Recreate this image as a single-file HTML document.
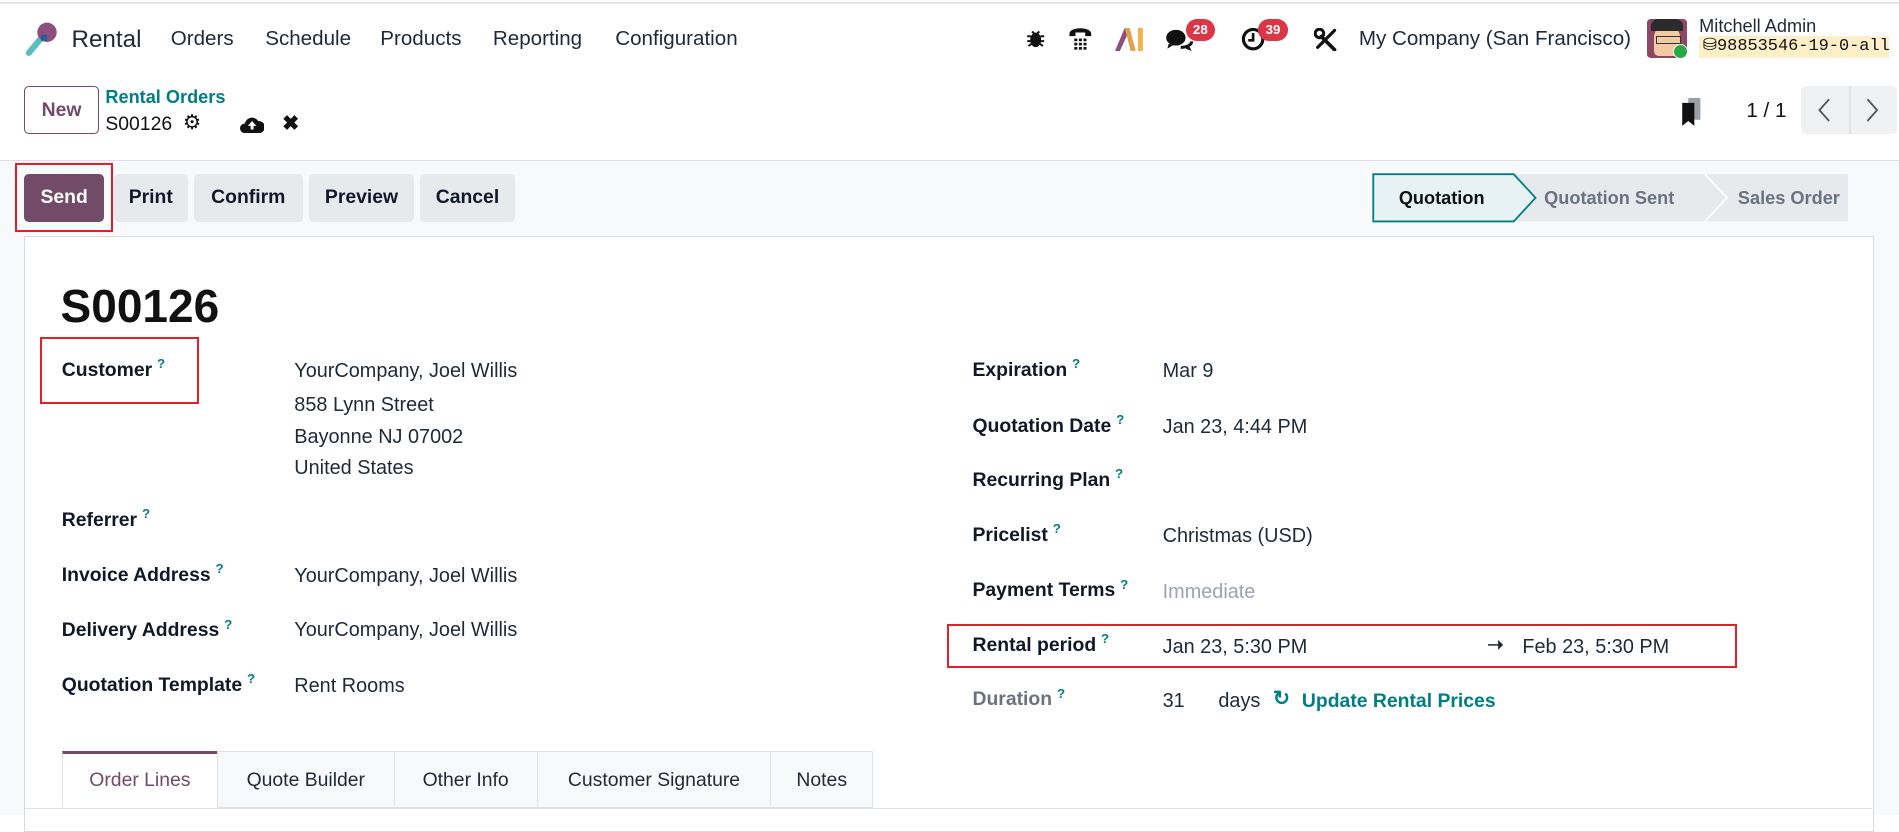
<!DOCTYPE html>
<html><head><meta charset="utf-8">
<style>
html,body{margin:0;padding:0}
body{width:1568px;height:672px;zoom:1.2111;position:relative;overflow:hidden;background:#fff;font-family:"Liberation Sans",sans-serif;color:#1f2937;font-size:16px}
.a{position:absolute;white-space:nowrap;line-height:1}
.v{font-size:16.4px}
.lb{font-weight:bold;color:#111827}
.q{color:#017e84;font-size:11px;vertical-align:top;margin-left:4px;position:relative;top:-3px}
.btn{position:absolute;top:144px;height:39px;line-height:39px;background:#e7e9ed;border-radius:4px;font-weight:bold;text-align:center;font-size:16px;color:#111827}
.tab{position:absolute;top:620px;height:47px;line-height:47px;text-align:center;border:1px solid #dee2e6;background:#f8f9fa;font-size:16px;box-sizing:border-box;color:#1f2937}
.badge{position:absolute;background:#dc3545;color:#fff;font-size:11px;font-weight:bold;border-radius:9px;padding:0 6px;height:18px;line-height:18px}
</style></head><body>
<div class="a" style="left:0;top:2px;width:1568px;height:1px;background:#e2e4e7"></div>
<svg class="a" style="left:20px;top:16px" width="30" height="32" viewBox="0 0 30 32"><line x1="4" y1="28" x2="14" y2="16" stroke="#5bbdbd" stroke-width="5" stroke-linecap="round"/><ellipse cx="19" cy="11" rx="8" ry="8" fill="#8c4f7e"/><rect x="14" y="13" width="5" height="5" fill="#2a5b9c"/></svg>
<div class="a" style="left:59px;top:23px;font-size:20px">Rental</div>
<div class="a" style="left:141px;top:24px;font-size:17px">Orders</div>
<div class="a" style="left:219px;top:24px;font-size:17px">Schedule</div>
<div class="a" style="left:314px;top:24px;font-size:17px">Products</div>
<div class="a" style="left:407px;top:24px;font-size:17px">Reporting</div>
<div class="a" style="left:508px;top:24px;font-size:17px">Configuration</div>
<svg class="a" style="left:847px;top:24px" width="16" height="16" viewBox="0 0 16 16"><ellipse cx="8" cy="9" rx="4.5" ry="6" fill="#111"/><path d="M1 6h3M12 6h3M1 10h3M12 10h3M2 14l3-2M14 14l-3-2M5 2l2 2M11 2l-2 2" stroke="#111" stroke-width="1.6"/></svg>
<svg class="a" style="left:881px;top:20px" width="22" height="22" viewBox="0 0 22 22"><path d="M2 8c0-6 18-6 18 0v2h-5V7H7v3H2z" fill="#111"/><g fill="#111"><rect x="6" y="12" width="2.5" height="2.2"/><rect x="9.8" y="12" width="2.5" height="2.2"/><rect x="13.6" y="12" width="2.5" height="2.2"/><rect x="6" y="15.5" width="2.5" height="2.2"/><rect x="9.8" y="15.5" width="2.5" height="2.2"/><rect x="13.6" y="15.5" width="2.5" height="2.2"/><rect x="6" y="19" width="2.5" height="2.2"/><rect x="9.8" y="19" width="2.5" height="2.2"/><rect x="13.6" y="19" width="2.5" height="2.2"/></g></svg>
<svg class="a" style="left:921px;top:23px" width="24" height="19" viewBox="0 0 24 19"><path d="M0 19L8 0h4l5 19h-4L10 6 4 19z" fill="#8c4f7e"/><path d="M8 0h4l5 19h-4z" fill="#e2a24a"/><rect x="19" y="0" width="4" height="19" fill="#f4b04a"/></svg>
<svg class="a" style="left:962px;top:23px" width="24" height="20" viewBox="0 0 24 20"><ellipse cx="9" cy="8" rx="8" ry="6.5" fill="#111"/><path d="M3 13l-1 4 5-3z" fill="#111"/><path d="M13 16c5 0 9-2 9-5" stroke="#111" stroke-width="2.5" fill="none"/><path d="M20 15l2 4-5-2z" fill="#111"/></svg>
<div class="badge" style="left:979px;top:16px">28</div>
<svg class="a" style="left:1025px;top:22px" width="20" height="20" viewBox="0 0 20 20"><circle cx="10" cy="10" r="8" stroke="#111" stroke-width="2.6" fill="none"/><path d="M10 5v6h-4" stroke="#111" stroke-width="2.2" fill="none"/></svg>
<div class="badge" style="left:1039px;top:16px">39</div>
<svg class="a" style="left:1085px;top:23px" width="20" height="19" viewBox="0 0 20 19"><path d="M6 7l11 11" stroke="#111" stroke-width="3" stroke-linecap="round"/><circle cx="4.5" cy="4.5" r="3.5" fill="none" stroke="#111" stroke-width="2.5"/><path d="M17 2L3 16" stroke="#111" stroke-width="2.6" stroke-linecap="round"/></svg>
<div class="a" style="left:1122px;top:24px;font-size:17px">My Company (San Francisco)</div>
<div class="a" style="left:1360px;top:16px;width:33px;height:32px;background:#8d4866;border-radius:3px;overflow:hidden"><div style="position:absolute;left:6px;top:6px;width:21px;height:24px;background:#f1c9a3;border-radius:8px 8px 4px 4px"></div><div style="position:absolute;left:3px;top:0;width:27px;height:10px;background:#2b2b2b;border-radius:6px 6px 0 0"></div><div style="position:absolute;left:7px;top:14px;width:19px;height:5px;border:1.5px solid #333"></div></div>
<div class="a" style="left:1381px;top:36px;width:11px;height:11px;border-radius:50%;background:#28a745;border:1.5px solid #fff"></div>
<div class="a" style="left:1403px;top:14px;font-size:15px">Mitchell Admin</div>
<div class="a" style="left:1403px;top:30px;width:157px;height:18px;background:#fdf0c8"></div>
<div class="a" style="left:1406px;top:32px;font-size:14px;font-family:'Liberation Mono',monospace;color:#111">&#9921;98853546-19-0-all</div>
<div class="a" style="left:20px;top:71px;width:60px;height:38px;border:1px solid #714b67;border-radius:4px;text-align:center;line-height:38px;color:#714b67;font-weight:bold;font-size:16px">New</div>
<div class="a" style="left:87px;top:73px;color:#017e84;font-weight:bold;font-size:15px">Rental Orders</div>
<div class="a" style="left:87px;top:95px;font-size:16px;color:#111">S00126</div>
<div class="a" style="left:151px;top:93px;font-size:17px;color:#111">&#9881;</div>
<svg class="a" style="left:198px;top:95px" width="20" height="15" viewBox="0 0 20 15"><path d="M4 15a4 4 0 0 1 0-8 6 6 0 0 1 11-2 4.5 4.5 0 0 1 1 10z" fill="#111"/><path d="M10 5l-3.5 4h2.3v3h2.4V9h2.3z" fill="#fff"/></svg>
<div class="a" style="left:233px;top:94px;font-size:17px;font-weight:bold;color:#111">&#10006;</div>
<svg class="a" style="left:1388px;top:81px" width="20" height="24" viewBox="0 0 20 24"><rect x="6" y="0" width="10" height="18" fill="#9aa0a6"/><path d="M1 4h10v19l-5-4-5 4z" fill="#111"/></svg>
<div class="a" style="left:1442px;top:83px;font-size:17px;color:#111">1 / 1</div>
<div class="a" style="left:1487px;top:71px;width:79px;height:40px;background:#f0f1f2;border-radius:4px"></div>
<div class="a" style="left:1527px;top:71px;width:1px;height:40px;background:#e0e2e5"></div>
<svg class="a" style="left:1500px;top:81px" width="12" height="20"><path d="M10 1L2 10l8 9" stroke="#555" stroke-width="1.5" fill="none"/></svg>
<svg class="a" style="left:1540px;top:81px" width="12" height="20"><path d="M2 1l8 9-8 9" stroke="#555" stroke-width="1.5" fill="none"/></svg>
<div class="a" style="left:0;top:132px;width:1568px;height:540px;background:#f8f9fa;border-top:1px solid #dcdfe3"></div>
<div class="btn" style="left:20px;width:66px;background:#714b67;color:#fff">Send</div>
<div class="a" style="left:12px;top:135px;width:78px;height:53px;border:2px solid #e3202a"></div>
<div class="btn" style="left:94px;width:61px">Print</div>
<div class="btn" style="left:160px;width:90px">Confirm</div>
<div class="btn" style="left:255px;width:87px">Preview</div>
<div class="btn" style="left:347px;width:78px">Cancel</div>
<svg class="a" style="left:1133px;top:143px" width="394" height="41" viewBox="0 0 394 41"><rect x="100" y="1" width="293" height="39" fill="#e7e9ed"/><path d="M1 1h116l18 19.5L117 40H1z" fill="#e6f2f3" stroke="#017e84" stroke-width="1.5"/><path d="M275 1l18 19.5L275 40" stroke="#fff" stroke-width="1.5" fill="none"/></svg>
<div class="a" style="left:1155px;top:156px;font-weight:bold;font-size:15px;color:#111">Quotation</div>
<div class="a" style="left:1275px;top:156px;font-size:15px;color:#6b7280;font-weight:bold">Quotation Sent</div>
<div class="a" style="left:1435px;top:156px;font-size:15px;color:#6b7280;font-weight:bold">Sales Order</div>
<div class="a" style="left:20px;top:195px;width:1526px;height:490px;background:#fff;border:1px solid #d8dadd"></div>
<div class="a" style="left:50px;top:234px;font-size:38px;font-weight:bold;color:#111">S00126</div>
<div class="a lb" style="left:51px;top:298px">Customer<span class="q">?</span></div>
<div class="a" style="left:33px;top:278px;width:128px;height:52px;border:2px solid #e3202a"></div>
<div class="a v" style="left:243px;top:299px">YourCompany, Joel Willis</div>
<div class="a v" style="left:243px;top:327px">858 Lynn Street</div>
<div class="a v" style="left:243px;top:353px">Bayonne NJ 07002</div>
<div class="a v" style="left:243px;top:379px">United States</div>
<div class="a lb" style="left:51px;top:422px">Referrer<span class="q">?</span></div>
<div class="a lb" style="left:51px;top:467px">Invoice Address<span class="q">?</span></div>
<div class="a v" style="left:243px;top:468px">YourCompany, Joel Willis</div>
<div class="a lb" style="left:51px;top:513px">Delivery Address<span class="q">?</span></div>
<div class="a v" style="left:243px;top:513px">YourCompany, Joel Willis</div>
<div class="a lb" style="left:51px;top:558px">Quotation Template<span class="q">?</span></div>
<div class="a v" style="left:243px;top:559px">Rent Rooms</div>
<div class="a lb" style="left:803px;top:298px">Expiration<span class="q">?</span></div>
<div class="a v" style="left:960px;top:299px">Mar 9</div>
<div class="a lb" style="left:803px;top:344px">Quotation Date<span class="q">?</span></div>
<div class="a v" style="left:960px;top:345px">Jan 23, 4:44 PM</div>
<div class="a lb" style="left:803px;top:389px">Recurring Plan<span class="q">?</span></div>
<div class="a lb" style="left:803px;top:434px">Pricelist<span class="q">?</span></div>
<div class="a v" style="left:960px;top:435px">Christmas (USD)</div>
<div class="a lb" style="left:803px;top:480px">Payment Terms<span class="q">?</span></div>
<div class="a v" style="left:960px;top:481px;color:#9ca3af">Immediate</div>
<div class="a lb" style="left:803px;top:525px">Rental period<span class="q">?</span></div>
<div class="a v" style="left:960px;top:527px">Jan 23, 5:30 PM</div>
<div class="a" style="left:1228px;top:525px;font-weight:bold">&#10141;</div>
<div class="a v" style="left:1257px;top:527px">Feb 23, 5:30 PM</div>
<div class="a" style="left:782px;top:515px;width:649px;height:33px;border:2px solid #e3202a"></div>
<div class="a lb" style="left:803px;top:570px;color:#6b7280">Duration<span class="q">?</span></div>
<div class="a v" style="left:960px;top:571px">31</div>
<div class="a v" style="left:1006px;top:571px">days</div>
<div class="a" style="left:1051px;top:569px;color:#017e84;font-weight:bold;font-size:17px">&#8635;</div>
<div class="a" style="left:1075px;top:571px;color:#017e84;font-weight:bold">Update Rental Prices</div>
<div class="a" style="left:21px;top:667px;width:1525px;height:1px;background:#dee2e6"></div>
<div class="tab" style="left:51px;width:129px;background:#fff;border-top:3px solid #714b67;border-bottom-color:#fff;color:#714b67;line-height:43px">Order Lines</div>
<div class="tab" style="left:179px;width:147px">Quote Builder</div>
<div class="tab" style="left:325px;width:119px">Other Info</div>
<div class="tab" style="left:443px;width:194px">Customer Signature</div>
<div class="tab" style="left:636px;width:85px">Notes</div>
</body></html>
